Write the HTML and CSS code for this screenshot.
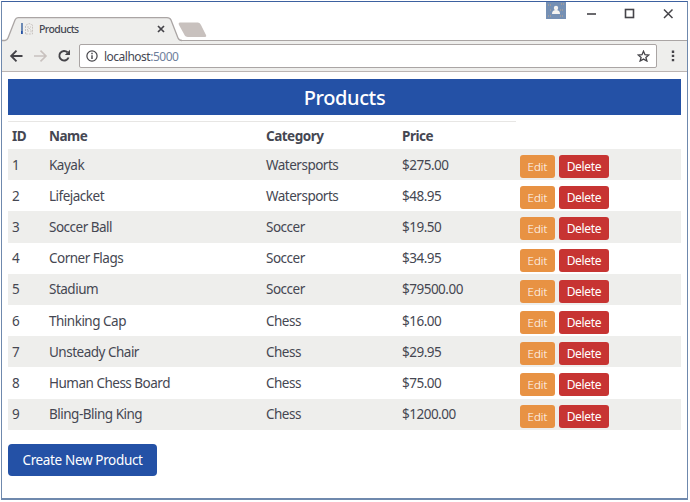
FILE: index.html
```
<!DOCTYPE html>
<html lang="en">
<head>
<meta charset="utf-8">
<title>Products</title>
<link rel="stylesheet" href="styles.css">
</head>
<body>
<div class="window">
  <header class="titlebar">
    <div class="tab">
      <svg class="tab-shape" width="182" height="25" viewBox="0 0 182 25">
        <path d="M0 23.500H3Q5 23.500 6 21L13 3Q14 .700 16 .700H165Q168 .700 169 3L176 21Q177 23.500 180 23.500V25H0Z" fill="#eeeeec"/>
        <path d="M0 23.500H3Q5 23.500 6 21L13 3Q14 .700 16 .700H165Q168 .700 169 3L176 21Q177 23.500 180 23.500" fill="none" stroke="#aaa5a4" stroke-width="1.300"/>
      </svg>
      <svg class="favicon" width="14" height="14" viewBox="0 0 14 14">
        <path d="M1 1H3V12H1Z" fill="#6b89b4"/><path d="M1 9H2.500V12H1Z" fill="#2451a6"/>
        <path d="M5.500 12V3.500L9 1.500L12.500 3V12ZM7 5H11M7 8L9 6L11 8V11M8 8V11" fill="none" stroke="#c8c3c0" stroke-dasharray="2 1"/>
      </svg>
      <span class="tab-title">Products</span>
      <svg class="tab-close" width="8" height="8" viewBox="0 0 8 8"><path d="M1 1L7 7M7 1L1 7" stroke="#454449" stroke-width="1.700"/></svg>
    </div>
    <svg class="new-tab" width="32" height="16" viewBox="0 0 32 16"><path d="M3 .5H21Q23 .500 24 3L29 13Q30 15 27 15H11Q8 15 7 12L2 3Q1 .500 3 .500Z" fill="#c8c1be"/></svg>
    <div class="controls">
      <svg width="140" height="26" viewBox="0 0 140 26">
        <path d="M0 0H20V17H0Z" fill="#7590b4"/>
        <path d="M2 3H5M15 2H18M2 14H6M14 14H18M4 8H6M14 8H17" stroke="#c4a78b" stroke-dasharray="1 1"/>
        <circle cx="10" cy="6" r="2.200" fill="#f4f3f1"/><path d="M6 12Q6 8 10 8T14 12Z" fill="#f4f3f1"/>
        <path d="M41 12H50" stroke="#454449" stroke-width="1.600"/>
        <rect x="79.500" y="7.500" width="8" height="8" fill="none" stroke="#454449" stroke-width="1.600"/>
        <path d="M118 7.500L126.500 16M126.500 7.500L118 16" stroke="#454449" stroke-width="1.500"/>
      </svg>
    </div>
  </header>
  <nav class="toolbar">
    <svg class="nav-icons" width="68" height="20" viewBox="0 0 68 20">
      <path d="M14.500 10H3.500M8.500 4.700L3.200 10L8.500 15.300" fill="none" stroke="#454449" stroke-width="1.900"/>
      <path d="M26 10H37.500M32.500 4.700L38 10L32.500 15.300" fill="none" stroke="#c8c1be" stroke-width="1.600"/>
      <path d="M59.500 6.300A4.800 4.800 0 1 0 60.600 11.500" fill="none" stroke="#454449" stroke-width="1.900"/><path d="M62 3.800V9H56.800Z" fill="#454449"/>
    </svg>
    <div class="address">
      <svg width="12" height="12" viewBox="0 0 12 12"><circle cx="6" cy="6" r="5.100" fill="none" stroke="#454449" stroke-width="1.200"/><path d="M6 5.200V9M6 2.800V4.200" stroke="#454449" stroke-width="1.400"/></svg>
      <span class="url">localhost<span class="port">:5000</span></span>
      <svg class="star" width="13" height="12" viewBox="0 0 13 12"><path d="M6.500 1.200L8 4.700L11.800 5L8.900 7.400L9.900 11L6.500 9.100L3.100 11L4.100 7.400L1.200 5L5 4.700Z" fill="none" stroke="#454449" stroke-width="1.300"/></svg>
    </div>
    <svg class="more" width="4" height="12" viewBox="0 0 4 12"><path d="M.8 .5H3.200V2.900H.8ZM.8 4.700H3.200V7.100H.8ZM.8 8.900H3.200V11.300H.8Z" fill="#454449"/></svg>
  </nav>
  <main class="page">
    <h1 class="heading">Products</h1>
    <table class="products">
      <thead><tr><th class="id">ID</th><th class="name">Name</th><th class="category">Category</th><th class="price">Price</th><th class="blank"></th></tr></thead>
      <tbody>
        <tr><td>1</td><td>Kayak</td><td>Watersports</td><td>$275.00</td><td><div class="actions"><button class="edit">Edit</button><button class="delete">Delete</button></div></td></tr>
        <tr><td>2</td><td>Lifejacket</td><td>Watersports</td><td>$48.95</td><td><div class="actions"><button class="edit">Edit</button><button class="delete">Delete</button></div></td></tr>
        <tr><td>3</td><td>Soccer Ball</td><td>Soccer</td><td>$19.50</td><td><div class="actions"><button class="edit">Edit</button><button class="delete">Delete</button></div></td></tr>
        <tr><td>4</td><td>Corner Flags</td><td>Soccer</td><td>$34.95</td><td><div class="actions"><button class="edit">Edit</button><button class="delete">Delete</button></div></td></tr>
        <tr><td>5</td><td>Stadium</td><td>Soccer</td><td>$79500.00</td><td><div class="actions"><button class="edit">Edit</button><button class="delete">Delete</button></div></td></tr>
        <tr><td>6</td><td>Thinking Cap</td><td>Chess</td><td>$16.00</td><td><div class="actions"><button class="edit">Edit</button><button class="delete">Delete</button></div></td></tr>
        <tr><td>7</td><td>Unsteady Chair</td><td>Chess</td><td>$29.95</td><td><div class="actions"><button class="edit">Edit</button><button class="delete">Delete</button></div></td></tr>
        <tr><td>8</td><td>Human Chess Board</td><td>Chess</td><td>$75.00</td><td><div class="actions"><button class="edit">Edit</button><button class="delete">Delete</button></div></td></tr>
        <tr><td>9</td><td>Bling-Bling King</td><td>Chess</td><td>$1200.00</td><td><div class="actions"><button class="edit">Edit</button><button class="delete">Delete</button></div></td></tr>
      </tbody>
    </table>
    <button class="create">Create New Product</button>
  </main>
</div>
</body>
</html>
```
FILE: styles.css
```
* { box-sizing: border-box; }
body {
  margin: 0;
  width: 690px;
  height: 502px;
  padding: 1px 2px 2px 1px;
  overflow: hidden;
  background: #fff;
  font-family: "Noto Sans", "Open Sans", sans-serif;
  color: #454752;
}
svg { display: block; flex: none; }
button { font-family: inherit; border: 0; margin: 0; padding: 0; color: #fff; }
.window {
  height: 499px;
  border: 1px solid #6f89ad;
  border-top-color: #3d61a0;
  border-bottom-width: 2px;
}
.titlebar {
  display: flex;
  height: 39px;
  background: linear-gradient(#aaa5a4, #aaa5a4) bottom / 100% 1px no-repeat;
}
.tab {
  position: relative;
  display: flex;
  align-items: center;
  width: 175px;
  margin-top: 15px;
  height: 24px;
  padding-left: 18px;
}
.tab-shape { position: absolute; left: 0; top: 0; }
.favicon, .tab-title, .tab-close { position: relative; }
.tab-title { font-size: 10.5px; line-height: 14px; margin-left: 5px; letter-spacing: -.6px; font-weight: 500; }
.tab-close { margin-left: auto; margin-right: 12px; }
.new-tab { margin-top: 20px; }
.controls { margin-left: auto; margin-right: 1px; }
.toolbar {
  display: flex;
  align-items: center;
  height: 31px;
  padding: 0 12px 0 6px;
  background: #eeeeec;
  border-bottom: 1px solid #bbb5b3;
}
.address {
  display: flex;
  align-items: center;
  width: 578px;
  height: 24px;
  margin-left: 3px;
  padding: 0 6px;
  background: #fff;
  border: 1px solid #aaa5a4;
  border-radius: 2px;
}
.url { margin-left: 6px; font-size: 12px; line-height: 18px; letter-spacing: -.5px; padding-top: 1px; }
.port { color: #6f7f9c; }
.star { margin-left: auto; }
.more { margin-left: auto; }
.page { padding: 7px 6px 0 6px; }
.heading {
  margin: 0;
  height: 36px;
  background: #2451a6;
  color: #fff;
  font-size: 20px;
  font-weight: 500;
  letter-spacing: -.4px;
  line-height: 38px;
  text-align: center;
}
.products {
  width: 673px;
  margin-top: 6px;
  border-collapse: separate;
  border-spacing: 0;
  table-layout: fixed;
  font-size: 13.5px;
  letter-spacing: -.5px;
}
th, td { padding: 0 0 0 4px; text-align: left; vertical-align: middle; }
th { height: 28px; border-top: 1px solid #e7e6e4; line-height: 26px; }
th.blank { border-top: 0; }
td { height: 31.2px; line-height: 30px; }
tbody tr:nth-child(odd) { background: #eeeeec; }
.id { width: 37px; }
.name { width: 217px; }
.category { width: 136px; }
.price { width: 118px; }
.actions { display: flex; gap: 4px; padding-top: 4px; }
.edit, .delete { height: 23px; border-radius: 3px; font-size: 12px; line-height: 23px; letter-spacing: -.3px; }
.edit { width: 35px; background: #e89243; font-size: 11.5px; font-weight: 300; letter-spacing: 0; }
.delete { width: 50px; background: #c73432; }
.create {
  display: block;
  width: 149px;
  height: 32px;
  margin-top: 14px;
  border-radius: 4px;
  background: #2451a6;
  font-size: 13.5px;
  letter-spacing: -.35px;
  line-height: 32px;
}
```
